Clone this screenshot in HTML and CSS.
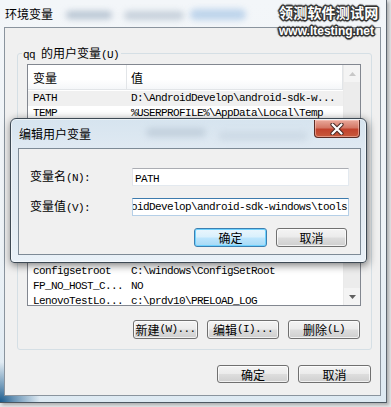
FILE: index.html
```html
<!DOCTYPE html>
<html lang="zh-CN">
<head>
<meta charset="utf-8">
<title>环境变量</title>
<link rel="stylesheet" href="styles.css">
</head>
<body>
<div class="win">
  <div class="titlebar">
    <span class="title">环境变量</span>
    <span class="blob b1"></span><span class="blob b2"></span><span class="blob b3"></span>
  </div>
  <div class="client">
    <div class="group">
      <div class="legend"><span class="a">qq </span>的用户变量<span class="a">(U)</span></div>
      <div class="list">
        <div class="list-main">
          <div class="lhead"><div class="hc c1">变量</div><div class="hc c2">值</div></div>
          <div class="row sel"><div class="c1 m">PATH</div><div class="c2 m">D:\AndroidDevelop\android-sdk-w...</div></div>
          <div class="row"><div class="c1 m">TEMP</div><div class="c2 m">%USERPROFILE%\AppData\Local\Temp</div></div>
          <div class="spacer"></div>
          <div class="row"><div class="c1 m">configsetroot</div><div class="c2 m">C:\windows\ConfigSetRoot</div></div>
          <div class="row"><div class="c1 m">FP_NO_HOST_C...</div><div class="c2 m">NO</div></div>
          <div class="row"><div class="c1 m">LenovoTestLo...</div><div class="c2 m">c:\prdv10\PRELOAD_LOG</div></div>
        </div>
        <div class="vscroll">
          <div class="sarrow up"><svg width="7" height="4" viewBox="0 0 7 4"><path d="M0 4 L3.5 0 L7 4 Z" fill="#c8c8c8"/></svg></div>
          <div class="strack"></div>
          <div class="sarrow down"><svg width="7" height="4" viewBox="0 0 7 4"><path d="M0 0 L3.5 4 L7 0 Z" fill="#606060"/></svg></div>
        </div>
      </div>
      <div class="btnrow inner-btns">
        <button class="btn w64">新建<span class="a">(W)...</span></button>
        <button class="btn w72">编辑<span class="a">(I)...</span></button>
        <button class="btn w72">删除<span class="a">(L)</span></button>
      </div>
    </div>
    <div class="btnrow main-btns">
      <button class="btn w72">确定</button>
      <button class="btn w73">取消</button>
    </div>
  </div>
</div>

<div class="dialog">
  <div class="dtitle">
    <span class="title">编辑用户变量</span>
    <span class="blob d1"></span><span class="blob d2"></span>
  </div>
  <div class="close">
    <svg width="14" height="12" viewBox="0 0 14 12"><path d="M2.5 1.5 L11.5 10.5 M11.5 1.5 L2.5 10.5" stroke="#4a2a26" stroke-width="4.2" stroke-linecap="round"/><path d="M2.5 1.5 L11.5 10.5 M11.5 1.5 L2.5 10.5" stroke="#ffffff" stroke-width="2.2" stroke-linecap="round"/></svg>
  </div>
  <div class="dclient">
    <div class="form">
      <div class="lbl">变量名<span class="a">(N):</span></div>
      <div class="edit"><span class="m">PATH</span></div>
      <div class="lbl">变量值<span class="a">(V):</span></div>
      <div class="edit focus"><span class="m">D:\AndroidDevelop\android-sdk-windows\tools</span></div>
    </div>
    <div class="btnrow dlg-btns">
      <button class="btn w73 default">确定</button>
      <button class="btn w71">取消</button>
    </div>
  </div>
</div>

<div class="watermark">
  <div class="wm1">领测软件测试网</div>
  <div class="wm2">www.ltesting.net</div>
</div>
</body>
</html>
```

FILE: styles.css
```css
* { box-sizing: border-box; }
html, body { margin: 0; padding: 0; }
body {
  width: 391px;
  height: 407px;
  overflow: hidden;
  position: relative;
  background: #e4e6e8;
  font-family: "Noto Sans CJK SC", "Noto Sans", sans-serif;
  font-size: 12px;
  color: #000;
}

.a, .m {
  font-family: "Liberation Mono", "DejaVu Sans Mono", monospace;
  font-size: 11px;
  letter-spacing: -0.6px;
}

/* ---------- outer window ---------- */
.win {
  width: 387px;
  height: 403px;
  display: flex;
  flex-direction: column;
  padding: 0 5px 6px 4px;
  background:
    radial-gradient(circle at 0 100%, #1a5a8c 0, rgba(26, 90, 140, 0.6) 14px, rgba(26, 90, 140, 0) 40px),
    linear-gradient(to bottom, #f3f6f9 0%, #eef3f7 60%, #dde9f2 100%);
  border-right: 1px solid #5d6670;
  border-bottom: 1px solid #4d5862;
  box-shadow: 2px 2px 3px rgba(0, 0, 0, 0.25);
}
.titlebar {
  height: 27px;
  flex: none;
  position: relative;
  padding: 7px 0 0 1px;
  line-height: 14px;
}
.title { position: relative; z-index: 1; }
.blob {
  position: absolute;
  border-radius: 6px;
  filter: blur(3px);
}
.b1 { left: 62px; top: 11px; width: 46px; height: 8px; background: #9fb0c2; opacity: 0.7; }
.b2 { left: 120px; top: 11px; width: 60px; height: 9px; background: #a9b8c8; opacity: 0.6; }
.b3 { left: 186px; top: 9px; width: 56px; height: 11px; background: #a7c6e6; opacity: 0.7; }

.client {
  flex: 1;
  background: #f0f0f0;
  border: 1px solid #8a949e;
  display: flex;
  flex-direction: column;
}
.group {
  position: relative;
  margin: 25px 0 0 12px;
  width: 355px;
  height: 297px;
  border: 1px solid #d5dfe5;
  border-radius: 3px;
  display: flex;
  flex-direction: column;
}
.legend {
  position: absolute;
  left: 4px;
  top: -8px;
  padding: 0 2px 0 1px;
  background: #f0f0f0;
  line-height: 14px;
}

.list {
  margin: 10px 0 0 9px;
  width: 334px;
  height: 242px;
  border: 1px solid #828790;
  background: #fff;
  display: flex;
  overflow: hidden;
}
.list-main {
  width: 315px;
  display: flex;
  flex-direction: column;
}
.lhead {
  height: 25px;
  flex: none;
  display: flex;
  background: linear-gradient(to bottom, #ffffff 0%, #ffffff 60%, #f5f7f9 100%);
  border-bottom: 1px solid #e2e5e8;
  border-right: 1px solid #e2e5e8;
  margin-bottom: 1px;
}
.hc { line-height: 24px; padding-top: 1px; }
.c1 { width: 98px; flex: none; padding-left: 5px; white-space: nowrap; overflow: hidden; }
.c2 { flex: 1; padding-left: 4px; white-space: nowrap; overflow: hidden; }
.lhead .c1 { border-right: 1px solid #e2e5e8; width: 99px; }
.row {
  height: 15px;
  flex: none;
  display: flex;
  line-height: 15px;
}
.row .c2 { padding-left: 5px; }
.row.sel { background: #f0f0f0; }
.spacer { height: 143px; flex: none; }

.vscroll {
  width: 17px;
  flex: none;
  display: flex;
  flex-direction: column;
  background: #f1f1f1;
  border-left: 1px solid #eaeaea;
}
.sarrow {
  height: 17px;
  flex: none;
  display: flex;
  align-items: center;
  justify-content: center;
  background: #f4f4f4;
}
.strack { flex: 1; background: #ececec; }

.btnrow { display: flex; justify-content: flex-end; }
.inner-btns { margin-top: 14px; padding-right: 11px; gap: 9px; }
.main-btns { margin-top: 15px; padding-right: 9px; gap: 9px; }

.btn {
  height: 19px;
  padding: 0;
  margin: 0;
  font-family: "Noto Sans CJK SC", "Noto Sans", sans-serif;
  font-size: 12px;
  line-height: 17px;
  color: #000;
  border: 1px solid #707070;
  border-radius: 3px;
  background: linear-gradient(to bottom, #f4f4f4 0%, #ebebeb 48%, #dddddd 52%, #cfcfcf 100%);
  box-shadow: inset 0 0 0 1px rgba(255, 255, 255, 0.7);
  display: flex;
  align-items: center;
  justify-content: center;
}
.main-btns .btn { height: 18px; }
.w64 { width: 65px; }
.w71 { width: 71px; }
.w72 { width: 72px; }
.w73 { width: 73px; }

/* ---------- edit dialog ---------- */
.dialog {
  position: absolute;
  left: 10px;
  top: 118px;
  width: 357px;
  height: 145px;
  padding: 0 5px 7px 7px;
  border: 1px solid #3d4954;
  border-radius: 6px 6px 4px 4px;
  background: linear-gradient(to bottom, #d6e4ef 0%, #dfe9f2 20%, #e4ecf3 70%, #e9f1f8 100%);
  box-shadow: 0 0 0 1px rgba(255, 255, 255, 0.5) inset, 1px 2px 8px rgba(0, 0, 0, 0.55);
  display: flex;
  flex-direction: column;
}
.dtitle {
  height: 29px;
  flex: none;
  position: relative;
  padding: 8px 0 0 1px;
  line-height: 14px;
}
.d1 { left: 128px; top: 9px; width: 60px; height: 9px; background: #b3c2d0; opacity: 0.6; }
.d2 { left: 200px; top: 12px; width: 90px; height: 10px; background: #c1cfdc; opacity: 0.5; }
.close {
  position: absolute;
  left: 303px;
  top: 1px;
  width: 46px;
  height: 18px;
  border: 1px solid #5a2c25;
  border-top: none;
  border-radius: 0 0 4px 4px;
  background: linear-gradient(to bottom, #e9a99b 0%, #d47866 45%, #c2432d 55%, #c75a3c 100%);
  box-shadow: inset 0 0 0 1px rgba(255, 210, 200, 0.5);
  display: flex;
  align-items: center;
  justify-content: center;
}
.dclient {
  width: 343px;
  height: 107px;
  flex: none;
  background: #f0f0f0;
  border: 1px solid #7d8a96;
  display: flex;
  flex-direction: column;
}
.form {
  margin-top: 18px;
  padding-left: 11px;
  display: grid;
  grid-template-columns: 102px 217px;
  row-gap: 10px;
  align-items: center;
}
.lbl { line-height: 18px; }
.edit {
  height: 18px;
  border: 1px solid #e3e9ef;
  border-top-color: #abadb3;
  border-left-color: #e2e3ea;
  background: #fff;
  line-height: 16px;
  padding-left: 2px;
  overflow: hidden;
  white-space: nowrap;
}
.edit.focus {
  border-color: #b5cfe7;
  border-top-color: #3d7bad;
  display: flex;
  justify-content: flex-end;
  padding-right: 1px;
}
.dlg-btns { margin-top: 11px; padding-right: 13px; gap: 9px; }
.btn.default {
  border-color: #3c7fb1;
  background: linear-gradient(to bottom, #eaf6fd 0%, #d9f0fc 48%, #bee6fd 52%, #a7d9f5 100%);
  box-shadow: inset 0 0 0 1px #6ed2ff;
}

/* ---------- watermark ---------- */
.watermark {
  position: absolute;
  left: 279px;
  top: 4px;
  color: #fff;
  font-weight: bold;
  text-shadow:
    1px 0 0 #333, -1px 0 0 #333, 0 1px 0 #333, 0 -1px 0 #333,
    1px 1px 0 #333, -1px -1px 0 #333, 1px -1px 0 #333, -1px 1px 0 #333,
    2px 0 1px #555, -2px 0 1px #555, 0 2px 1px #555, 0 -2px 1px #555;
}
.wm1 { font-size: 14px; line-height: 17px; letter-spacing: 0.2px; }
.wm2 { font-family: "Liberation Sans", Arial, sans-serif; font-size: 12px; line-height: 14px; margin-top: 3px; }
```
